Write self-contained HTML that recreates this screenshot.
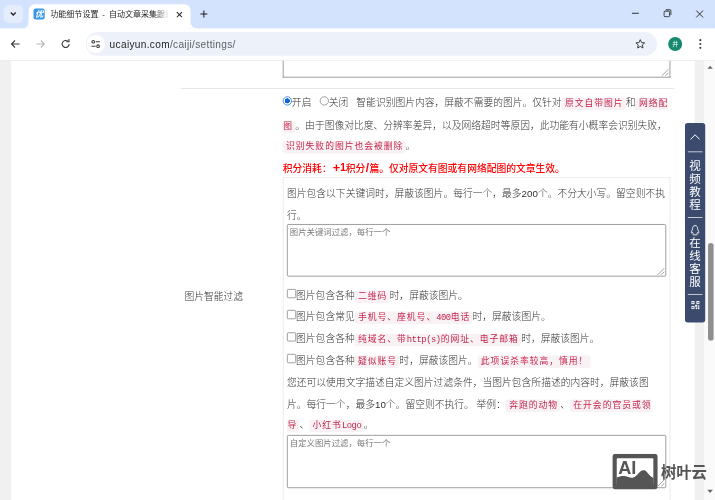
<!DOCTYPE html>
<html lang="zh-CN">
<head>
<meta charset="utf-8">
<title>功能细节设置 - 自动文章采集</title>
<style>
html,body{margin:0;padding:0;background:#fff;overflow:hidden;}
body{width:715px;height:500px;position:relative;}
#stage{position:absolute;left:0;top:0;width:1024px;height:718px;transform:scale(0.69824);transform-origin:0 0;overflow:hidden;
  font-family:"Liberation Sans","Noto Sans CJK SC",sans-serif;font-size:14px;font-weight:300;color:#333;background:#fff;}
#stage *{box-sizing:border-box;}
.abs{position:absolute;}
/* ---------- chrome ui ---------- */
#tabstrip{left:0;top:0;width:1024px;height:41px;background:#d3e3fd;}
#tabdrop{left:5px;top:7px;width:28px;height:26px;border-radius:8px;background:#e4edfc;}
#tab{left:41px;top:6px;width:232px;height:35px;background:#fff;border-radius:9px 9px 0 0;}
#tab:before,#tab:after{content:"";position:absolute;bottom:0;width:9px;height:9px;}
#tab:before{left:-9px;background:radial-gradient(circle at 0 0,rgba(255,255,255,0) 8.5px,#fff 9px);}
#tab:after{right:-9px;background:radial-gradient(circle at 100% 0,rgba(255,255,255,0) 8.5px,#fff 9px);}
#favicon{left:48px;top:12px;width:16px;height:16px;border-radius:3px;background:#3a97e8;color:#fff;font-size:12px;line-height:16px;text-align:center;font-weight:bold;font-style:italic;overflow:hidden;}
#tabtitle{left:72px;top:10px;width:172px;height:20px;line-height:20px;font-size:11.5px;word-spacing:2.4px;font-weight:400;color:#1f1f1f;white-space:nowrap;overflow:hidden;
  -webkit-mask-image:linear-gradient(90deg,#000 150px,transparent 170px);mask-image:linear-gradient(90deg,#000 150px,transparent 170px);}
#toolbar{left:0;top:41px;width:1024px;height:45px;background:#fff;}
#tbline{left:0;top:86px;width:1024px;height:1px;background:#e4e6ea;}
#omni{left:123px;top:46px;width:818px;height:34px;border-radius:17px;background:#edf2fa;}
#sitechip{left:124px;top:50px;width:26px;height:26px;border-radius:13px;background:#fff;}
#url{left:157px;top:53px;height:22px;line-height:22px;font-size:14.5px;font-weight:400;color:#1f1f1f;white-space:nowrap;letter-spacing:0.45px;}
#avatar{left:957px;top:53px;width:20px;height:20px;border-radius:10px;background:#16896f;color:#fff;font-size:8.5px;font-weight:400;line-height:20px;text-align:center;}
/* ---------- page ---------- */
#page{left:0;top:87px;width:1009px;height:631px;background:#f0f0f0;overflow:hidden;}
#white{left:16px;top:0;width:979px;height:631px;background:#fff;}
#track{left:1009px;top:87px;width:15px;height:631px;background:#fafafa;}
#thumb{left:1014px;top:348px;width:8px;height:140px;border-radius:4px;background:#8f8f8f;}
#rowline{left:259px;top:126px;width:707px;height:1px;background:#ddd;}
#ta0{left:405px;top:87px;width:555px;height:24px;border:1px solid #767676;border-top:none;background:#fff;}
#label{left:264.1px;top:414.2px;line-height:20px;white-space:nowrap;}
.ln{height:30.8px;line-height:30.8px;white-space:nowrap;}
.ln.m{left:405px;}
.ln.b{left:411px;}
code.nl{padding-left:0.7px;border-top-left-radius:0;border-bottom-left-radius:0;}
code.nr{padding-right:0;border-top-right-radius:0;border-bottom-right-radius:0;}
code{font-family:"Liberation Mono","Noto Sans CJK SC",monospace;font-size:12.6px;font-weight:400;line-height:1;color:#c7254e;background:#f9f2f4;border-radius:4px;padding:2px 3.3px 2px 4.7px;letter-spacing:1.4px;}
code i{font-style:normal;letter-spacing:-0.63px;}
.red{color:#f00;font-weight:500;}
#box{left:405px;top:253.6px;width:555px;height:470px;border:1px solid #e3e3e3;}
.ta{left:411px;width:543px;height:75.5px;border:1px solid #767676;border-radius:2px;background:#fff;font-size:12px;font-weight:400;line-height:16px;color:#7a7a7a;padding:2.8px 3px;}
.grip{position:absolute;right:1px;bottom:1px;width:11px;height:11px;}
.rd,.cb{display:inline-block;width:13px;height:13px;vertical-align:1px;background:#fff;border:1px solid #767676;}
.rd{border-radius:50%;}
.rd.on{border:1.3px solid #0b65d8;background:radial-gradient(circle,#0b65d8 0,#0b65d8 3.4px,#fff 3.9px);}
.cb{border-radius:2px;}
/* ---------- side bar ---------- */
#side{left:981px;top:176px;width:29px;height:286px;background:#3a4b6e;border-radius:4px;color:#fff;font-weight:400;}
#side .sep{position:absolute;left:4px;width:21px;height:1.4px;background:#fff;}
#side .vt{position:absolute;left:0;width:29px;text-align:center;font-size:16.5px;line-height:18.8px;}
/* ---------- watermark ---------- */
#wmtext{left:946.5px;top:662.5px;font-size:22px;line-height:30px;font-weight:bold;color:#555;white-space:nowrap;}
</style>
</head>
<body>
<div id="stage">
  <!-- chrome ui -->
  <div class="abs" id="tabstrip"></div>
  <div class="abs" id="tabdrop"></div>
  <svg class="abs" style="left:14px;top:15px" width="10" height="10" viewBox="0 0 10 10"><path d="M1.5 3 L5 6.5 L8.5 3" fill="none" stroke="#1f1f1f" stroke-width="1.8"/></svg>
  <div class="abs" id="tab"></div>
  <div class="abs" id="favicon">优</div>
  <div class="abs" id="tabtitle">功能细节设置 - 自动文章采集跟踪工具</div>
  <svg class="abs" style="left:251.5px;top:15.5px" width="10" height="10" viewBox="0 0 10 10"><path d="M1.3 1.3 L8.7 8.7 M8.7 1.3 L1.3 8.7" fill="none" stroke="#1f1f1f" stroke-width="1.5"/></svg>
  <svg class="abs" style="left:286px;top:14px" width="12" height="12" viewBox="0 0 12 12"><path d="M6 1 V11 M1 6 H11" fill="none" stroke="#1f1f1f" stroke-width="1.5"/></svg>
  <svg class="abs" style="left:904px;top:13px" width="12" height="12" viewBox="0 0 12 12"><path d="M1 6 H11" stroke="#1f1f1f" stroke-width="1.3"/></svg>
  <svg class="abs" style="left:950px;top:13px" width="12" height="12" viewBox="0 0 12 12"><rect x="1" y="3" width="8" height="8" rx="1.5" fill="none" stroke="#1f1f1f" stroke-width="1.3"/><path d="M3.5 1 H9.5 Q11 1 11 2.5 V8.5" fill="none" stroke="#1f1f1f" stroke-width="1.3"/></svg>
  <svg class="abs" style="left:996px;top:14px" width="12" height="12" viewBox="0 0 12 12"><path d="M1 1 L11 11 M11 1 L1 11" stroke="#1f1f1f" stroke-width="1.3"/></svg>
  <div class="abs" id="toolbar"></div>
  <div class="abs" id="tbline"></div>
  <svg class="abs" style="left:14px;top:55px" width="16" height="16" viewBox="0 0 16 16"><path d="M14 8 H2.5 M7.5 3 L2.5 8 L7.5 13" fill="none" stroke="#3c3c3c" stroke-width="1.6"/></svg>
  <svg class="abs" style="left:50px;top:55px" width="16" height="16" viewBox="0 0 16 16"><path d="M2 8 H13.5 M8.5 3 L13.5 8 L8.5 13" fill="none" stroke="#b8b8b8" stroke-width="1.6"/></svg>
  <svg class="abs" style="left:86px;top:55px" width="16" height="16" viewBox="0 0 16 16"><path d="M13 8 A5 5 0 1 1 11.5 4.4" fill="none" stroke="#3c3c3c" stroke-width="1.6"/><path d="M9 4.8 H12.8 V1" fill="none" stroke="#3c3c3c" stroke-width="1.6"/></svg>
  <div class="abs" id="omni"></div>
  <div class="abs" id="sitechip"></div>
  <svg class="abs" style="left:129px;top:55px" width="16" height="16" viewBox="0 0 16 16"><g fill="none" stroke="#3c3c3c" stroke-width="1.5"><circle cx="4.5" cy="4.8" r="1.9"/><path d="M8 4.8 H14"/><circle cx="11.5" cy="11.2" r="1.9"/><path d="M2 11.2 H8"/></g></svg>
  <div class="abs" id="url">ucaiyun.com<span style="color:#5e6166">/caiji/settings/</span></div>
  <svg class="abs" style="left:909px;top:55px" width="16" height="16" viewBox="0 0 16 16"><path d="M8 1.8 L9.8 6 L14.3 6.4 L10.9 9.4 L11.9 13.8 L8 11.5 L4.1 13.8 L5.1 9.4 L1.7 6.4 L6.2 6 Z" fill="none" stroke="#3c3c3c" stroke-width="1.4" stroke-linejoin="round"/></svg>
  <div class="abs" id="avatar">井</div>
  <svg class="abs" style="left:999px;top:54px" width="8" height="18" viewBox="0 0 8 18"><circle cx="4" cy="3.5" r="1.5" fill="#3c3c3c"/><circle cx="4" cy="9" r="1.5" fill="#3c3c3c"/><circle cx="4" cy="14.5" r="1.5" fill="#3c3c3c"/></svg>

  <!-- page -->
  <div class="abs" id="page"><div class="abs" id="white"></div></div>
  <div class="abs" id="ta0"><svg class="grip" viewBox="0 0 11 11"><path d="M10.5 1 L1 10.5 M10.5 6 L6 10.5" stroke="#777" stroke-width="1"/></svg></div>
  <div class="abs" id="rowline"></div>
  <div class="abs" id="label">图片智能过滤</div>
  <div class="abs" id="box"></div>
  <div class="abs ln m" style="top:131.75px"><span class="rd on"></span>开启&nbsp;&nbsp; <span class="rd"></span>关闭&nbsp;&nbsp; 智能识别图片内容，屏蔽不需要的图片。仅针对<code>原文自带图片</code>和<code class="nr">网络配</code></div>
  <div class="abs ln m" style="top:164.9px"><code class="nl">图</code>。由于图像对比度、分辨率差异，以及网络超时等原因，此功能有小概率会识别失败，</div>
  <div class="abs ln m" style="top:193.50px"><code>识别失败的图片也会被删除</code>。</div>
  <div class="abs ln m red" style="top:226.10px">积分消耗：<b style="font-size:18px;line-height:1;margin-left:1.5px;margin-right:1px;position:relative;top:-0.5px">+</b><b style="font-size:14.5px;line-height:1;margin-right:-0.4px;margin-left:-0.6px;position:relative;top:-1px">1</b>积分<b style="font-size:17px;line-height:1;padding:0 0.6px;position:relative;top:-0.5px">/</b>篇。仅对原文有图或有网络配图的文章生效。</div>
  <div class="abs ln b" style="top:261.80px">图片包含以下关键词时，屏蔽该图片。每行一个，最多200个。不分大小写。留空则不执</div>
  <div class="abs ln b" style="top:292.60px">行。</div>
  <div class="abs ln b" style="top:407.60px"><span class="cb"></span>图片包含各种<code>二维码</code>时，屏蔽该图片。</div>
  <div class="abs ln b" style="top:438.10px"><span class="cb"></span>图片包含常见<code>手机号、座机号、<i>400</i>电话</code>时，屏蔽该图片。</div>
  <div class="abs ln b" style="top:470.0px"><span class="cb"></span>图片包含各种<code>纯域名、带<i>http(s)</i>的网址、电子邮箱</code>时，屏蔽该图片。</div>
  <div class="abs ln b" style="top:501.2px"><span class="cb"></span>图片包含各种<code>疑似账号</code>时，屏蔽该图片。<code>此项误杀率较高，慎用！</code></div>
  <div class="abs ln b" style="top:532.50px">您还可以使用文字描述自定义图片过滤条件，当图片包含所描述的内容时，屏蔽该图</div>
  <div class="abs ln b" style="top:563.6px">片。每行一个，最多10个。留空则不执行。 举例：<code>奔跑的动物</code>、<code class="nr">在开会的官员或领</code></div>
  <div class="abs ln b" style="top:592.70px"><code class="nl">导</code>、<code>小红书<i>Logo</i></code>。</div>
  <div class="abs ta" style="top:320.7px">图片关键词过滤，每行一个<svg class="grip" viewBox="0 0 11 11"><path d="M10.5 1 L1 10.5 M10.5 6 L6 10.5" stroke="#777" stroke-width="1"/></svg></div>
  <div class="abs ta" style="top:623.1px">自定义图片过滤，每行一个<svg class="grip" viewBox="0 0 11 11"><path d="M10.5 1 L1 10.5 M10.5 6 L6 10.5" stroke="#777" stroke-width="1"/></svg></div>

  <!-- scrollbar -->
  <div class="abs" id="track"></div>
  <div class="abs" id="thumb"></div>
  <svg class="abs" style="left:1012px;top:92px" width="10" height="8" viewBox="0 0 10 8"><path d="M1 6.5 L5 2 L9 6.5 Z" fill="#6a6a6a"/></svg>
  <svg class="abs" style="left:1012px;top:700px" width="10" height="8" viewBox="0 0 10 8"><path d="M1 1.5 L5 6 L9 1.5 Z" fill="#6a6a6a"/></svg>

  <!-- side bar -->
  <div class="abs" id="side">
    <svg style="position:absolute;left:7px;top:15px" width="15" height="10" viewBox="0 0 15 10"><path d="M1 8.7 L7.5 2 L14 8.7" fill="none" stroke="#fff" stroke-width="1.4"/></svg>
    <div class="sep" style="top:41px"></div>
    <div class="vt" style="top:52.6px">视<br>频<br>教<br>程</div>
    <div class="sep" style="top:134.7px"></div>
    <svg style="position:absolute;left:8px;top:146px" width="13" height="15.6" viewBox="0 0 15 18"><path d="M7.5 1.2 C4.6 1.2 3.3 3.6 3.3 6.4 C3.3 7.6 2.9 8.6 2 10 C1 11.6 1 13.6 1.8 13.6 C2.4 13.6 2.9 12.8 3.2 12.4 C3.4 13.6 4 14.5 4.8 15.1 C3.8 15.5 3.6 16.6 5 16.6 H10 C11.4 16.6 11.2 15.5 10.2 15.1 C11 14.5 11.6 13.6 11.8 12.4 C12.1 12.8 12.6 13.6 13.2 13.6 C14 13.6 14 11.6 13 10 C12.1 8.6 11.7 7.6 11.7 6.4 C11.7 3.6 10.4 1.2 7.5 1.2 Z" fill="none" stroke="#fff" stroke-width="1.5"/></svg>
    <div class="vt" style="top:162.8px">在<br>线<br>客<br>服</div>
    <div class="sep" style="top:245px"></div>
    <svg style="position:absolute;left:8.5px;top:254.5px" width="12" height="12" viewBox="0 0 13 13"><g fill="#fff"><rect x="0" y="0" width="5" height="5"/><rect x="8" y="0" width="5" height="5"/><rect x="0" y="8" width="5" height="5"/><rect x="6" y="6" width="3" height="3"/><rect x="10" y="7" width="3" height="2"/><rect x="7" y="10" width="2" height="3"/><rect x="10" y="10" width="3" height="3"/></g><g fill="#3a4b6e"><rect x="1.5" y="1.5" width="2" height="2"/><rect x="9.5" y="1.5" width="2" height="2"/><rect x="1.5" y="9.5" width="2" height="2"/></g></svg>
  </div>

  <!-- watermark -->
  <svg class="abs" style="left:877px;top:649.5px" width="65" height="51" viewBox="0 0 65 51"><rect x="0" y="0" width="65" height="51" rx="5" fill="#555"/><rect x="6.3" y="6.3" width="52.4" height="38.4" rx="1" fill="#fff"/><path d="M6 34 C10 32 14 31.3 17.5 31.8 C22 32.5 25 34.8 29 34.2 C34 33.4 37 27.5 40.5 25 C43.5 22.8 46.5 22.8 49 25.5 C52.5 29.5 55 33 59 34.5 V46 H6 Z" fill="#555"/><text x="8.3" y="28.8" font-family="Liberation Sans, sans-serif" font-weight="bold" font-size="26" fill="#555">AI</text></svg>
  <div class="abs" id="wmtext">树叶云</div>
</div>
</body>
</html>
